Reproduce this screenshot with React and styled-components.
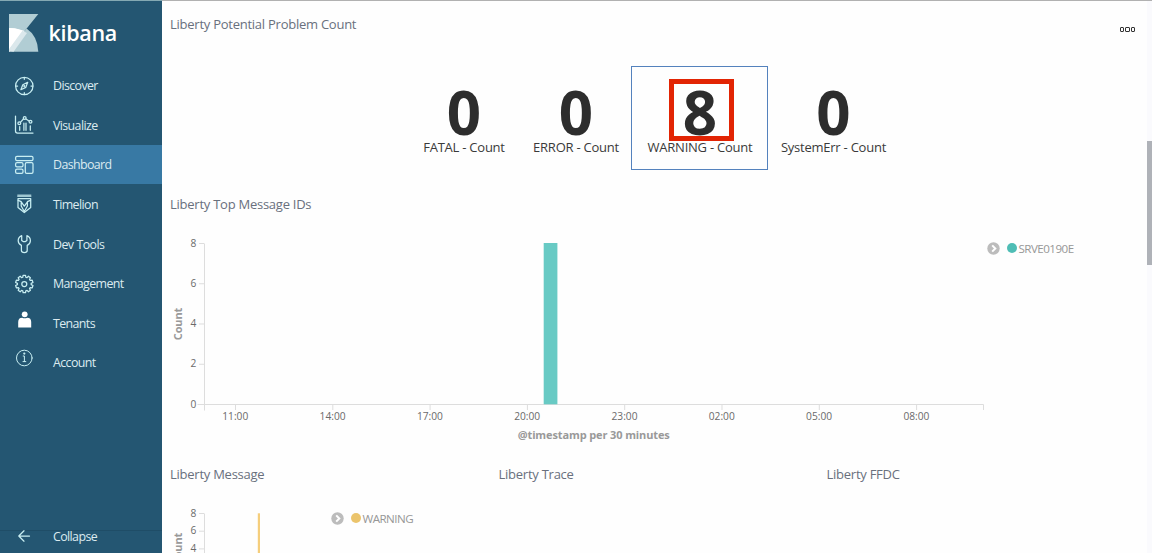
import React from "react";
import styled, { createGlobalStyle } from "styled-components";

const GlobalStyle = createGlobalStyle`
  * { box-sizing: border-box; }
  body { margin: 0; background: #fff; overflow: hidden; font-family: "Open Sans", "Noto Sans", sans-serif; }
`;

const Page = styled.div`
  display: flex;
  height: 553px;
  overflow: hidden;
  background: #fefefe;
`;

const Sidebar = styled.nav`
  width: 162px;
  flex: none;
  display: flex;
  flex-direction: column;
  background: #245672;
  border-top: 1px solid #84a9b3;
`;

const Brand = styled.div`
  display: flex;
  height: 64.4px;
  padding: 13px 0 0 9px;
  gap: 9.5px;
  flex: none;
`;

const BrandName = styled.span`
  color: #fff;
  font: 600 21.5px/38px "Open Sans", sans-serif;
  letter-spacing: -0.3px;
`;

const NavItem = styled.a`
  display: flex;
  align-items: center;
  flex: none;
  height: 39.6px;
  padding: 1px 0 0 14px;
  gap: 18px;
  color: #dcebf0;
  font-size: 12.4px;
  letter-spacing: -0.6px;
  word-spacing: 0.5px;
  background: ${(p) => (p.$active ? "#3879a4" : "transparent")};

  svg {
    flex: none;
    position: relative;
    top: ${(p) => p.$lift || 0}px;
  }
`;

const CollapseBar = styled(NavItem)`
  height: 23px;
  margin-top: auto;
  padding-top: 0;
  border-top: 1px solid #1f4d67;
  align-items: flex-start;
  line-height: 11px;
`;

const Main = styled.main`
  flex: 1;
  min-width: 0;
  display: flex;
  flex-direction: column;
  border-top: 1px solid #b1b1b1;
`;

const Scrollbar = styled.div`
  width: 5px;
  flex: none;
  padding-top: 140px;
  background: #fafafd;
  border-top: 1px solid #b1b1b1;
`;

const Thumb = styled.div`
  height: 124px;
  background: #afb2b8;
`;

const Panel = styled.section`
  height: ${(p) => p.$height}px;
  flex: none;
`;

const PanelHeader = styled.header`
  display: flex;
  justify-content: space-between;
  height: 56px;
  padding: 13px 12px 0 8px;
`;

const PanelTitle = styled.h2`
  margin: 0;
  color: #69707d;
  font-size: 13px;
  font-weight: 400;
  line-height: 20px;
  letter-spacing: -0.25px;
  white-space: nowrap;
`;

const MenuDots = styled.div`
  display: flex;
  gap: 1px;
  padding-top: 13px;
  span {
    width: 4.4px;
    height: 4.6px;
    border: 1px solid #333;
    border-radius: 1px;
  }
`;

const Metrics = styled.div`
  display: flex;
  padding: 9px 0 0 245px;
`;

const Metric = styled.div`
  width: ${(p) => p.$width}px;
  height: 104px;
  border: 1px solid ${(p) => (p.$selected ? "#5482bd" : "transparent")};
  display: flex;
  flex-direction: column;
  align-items: center;
  padding-top: 12px;
`;

const MetricValue = styled.div`
  width: 65px;
  height: 62px;
  margin-left: ${(p) => (p.$marked ? 3 : 1)}px;
  border: 5px solid ${(p) => (p.$marked ? "#e22404" : "transparent")};
  color: #2d2d2d;
  font: 700 60px/57px "Open Sans", sans-serif;
  display: flex;
  justify-content: center;

  span { margin-left: ${(p) => (p.$marked ? -2 : 0)}px; }
`;

const MetricLabel = styled.div`
  color: #3a3a3a;
  font-size: 13px;
  line-height: 16px;
  letter-spacing: -0.24px;
  margin: -2px 0 0 1px;
  white-space: nowrap;
`;

const ChartRow = styled.div`
  display: flex;
`;

const Legend = styled.div`
  display: flex;
  align-items: center;
  height: 22px;
  color: #979797;
  font-size: 11.6px;
  letter-spacing: -0.53px;
`;

const LegendDot = styled.span`
  width: 10px;
  height: 10px;
  border-radius: 50%;
  margin: 0 2px 0 6.5px;
  background: ${(p) => p.$color};
`;

const Thirds = styled.div`
  display: grid;
  grid-template-columns: 328.5px 328px 1fr;
`;

const Tick = styled.text`
  fill: #6a6a6a;
  font-size: 10.2px;
`;

const AxisTitle = styled.text`
  fill: #999;
  font-size: 11px;
  font-weight: 700;
  letter-spacing: -0.12px;
`;

const Icon = ({ children }) => (
  <svg width="21" height="20" viewBox="0 0 21 20" fill="none" stroke="#c8eef2" strokeWidth="1.25" strokeLinejoin="round" strokeLinecap="round">
    {children}
  </svg>
);

const gearPath = (() => {
  const pts = [];
  for (let i = 0; i < 10; i++) {
    [[-13, 6.9], [-8, 8.8], [8, 8.8], [13, 6.9]].forEach(([d, r]) => {
      const a = ((i * 36 + d) * Math.PI) / 180;
      pts.push(`${(10.3 + r * Math.sin(a)).toFixed(2)} ${(10 - r * Math.cos(a)).toFixed(2)}`);
    });
  }
  return `M${pts.join("L")}Z`;
})();

const NAV = [
  { label: "Discover", icon: <><circle cx="10.3" cy="10" r="8.7" /><path d="M13.7 6.3L11.8 11.4L6.9 13.7L8.8 8.8ZM10.3 1.5v1.8M10.3 16.7v1.8M1.8 10h1.8M17 10h1.8" /><circle cx="10.3" cy="10" r=".5" /></> },
  { label: "Visualize", icon: <><path d="M1.5 1v15q0 2 2 2h15.5M5.7 15.3v-3.7M9.9 15.3V8M12 15.3V8M16.3 15.3v-4.5M6.4 7.3L9.4 4M12 4L15 6" /><circle cx="5.3" cy="8.3" r="1.4" /><circle cx="10.7" cy="3" r="1.4" /><circle cx="16.5" cy="6.7" r="1.4" /></> },
  { label: "Dashboard", active: true, icon: <><rect x="1.6" y="1.3" width="17.4" height="4.3" rx="1.4" /><rect x="1.6" y="7.6" width="7.4" height="4.2" rx="1.4" /><rect x="1.6" y="14" width="7.4" height="4.3" rx="1.4" /><rect x="11.3" y="7.6" width="7.7" height="10.7" rx="1.4" /></> },
  { label: "Timelion", icon: <><path d="M3.7 1h13.2M3.7 2.3h13.2" opacity=".75" /><path d="M4 4.5h12.7v9.1L10.3 18.5L4 13.6Z" /><path d="M4.2 6.4l3 1.2v4.4l3.1 5.5l3.1-5.5V7.6l3-1.2M7.4 8.2l2.9 4L13.3 8.2" /></> },
  { label: "Dev Tools", icon: <path d="M7.7 1.7v4.7l1.5 1.2h2.2l1.5-1.2V1.7C15.2 2.6 16.4 4.4 16.4 6.8c0 2-1.2 3.6-3.2 4.6v5.2q0 2-2.9 2t-2.9-2v-5.2C5.4 10.4 4.2 8.8 4.2 6.8C4.2 4.4 5.4 2.6 7.7 1.7Z" /> },
  { label: "Management", icon: <><path d={gearPath} /><circle cx="10.3" cy="10" r="2.5" /></> },
  { label: "Tenants", lift: -3.5, icon: <g fill="#fff" stroke="none"><circle cx="10.7" cy="4.3" r="2.9" /><path d="M4.2 17.4V12q0-4.3 4-4.3q2.5 1.3 5 0q4 0 4 4.3v5.4Z" /></g> },
  { label: "Account", lift: -4.5, icon: <><circle cx="10.3" cy="10" r="7.8" strokeWidth="1" /><path d="M9.2 8h1.2v5.5M9 13.6h2.8" strokeWidth="1" /><circle cx="10.3" cy="5.5" r=".5" /></> },
];

const KibanaMark = () => (
  <svg width="30" height="38" viewBox="0 0 30 38">
    <path d="M0 0H29.3L0 36.4Z" fill="#b1cdd4" />
    <path d="M0 14A29.3 24 0 0 1 18 18.6L0 38Z" fill="#fff" />
    <path d="M17.6 14.6Q28.6 22 29.3 37.7H4.5L0 36.4Z" fill="#b1cdd4" />
    <path d="M13 16.6L18 18.9L4.6 37.7H0V34.5Z" fill="#dbe8ec" />
    <path d="M0 14A29.3 24 0 0 1 13.4 16.8L0 35Z" fill="#fff" />
  </svg>
);

const Toggle = () => (
  <svg width="13" height="13" viewBox="0 0 13 13">
    <circle cx="6.5" cy="6.5" r="6.2" fill="#bcbcbc" />
    <path d="M5.2 3.4L8.3 6.5L5.2 9.6" fill="none" stroke="#fff" strokeWidth="2" />
  </svg>
);

const HOURS = ["11:00", "14:00", "17:00", "20:00", "23:00", "02:00", "05:00", "08:00"];

const TopChart = () => (
  <svg width="825" height="212" viewBox="0 0 825 212">
    <path d="M42.5 6.5V173.5M35.5 167.5H821.5V173" fill="none" stroke="#ddd" />
    {[8, 6, 4, 2, 0].map((v, i) => (
      <g key={v}>
        <path d={`M37 ${6.5 + i * 40.25}H42`} stroke="#ddd" />
        <Tick x="34.3" y={9.5 + i * 40.25} textAnchor="end">{v}</Tick>
      </g>
    ))}
    {HOURS.map((h, i) => (
      <g key={h}>
        <path d={`M${73.5 + i * 97.3} 168v5`} stroke="#ddd" />
        <Tick x={73.3 + i * 97.3} y="183" textAnchor="middle">{h}</Tick>
      </g>
    ))}
    <rect x="381.7" y="6" width="13.7" height="161.3" fill="#68cac4" />
    <AxisTitle transform="translate(20 87) rotate(-90)" textAnchor="middle">Count</AxisTitle>
    <AxisTitle x="431.7" y="202" textAnchor="middle">@timestamp per 30 minutes</AxisTitle>
  </svg>
);

const MessageChart = () => (
  <svg width="169" height="90" viewBox="0 0 169 90">
    <path d="M42.5 6.5V90" stroke="#ddd" />
    {[8, 6, 4].map((v, i) => (
      <g key={v}>
        <path d={`M37 ${6.5 + i * 17.7}H42`} stroke="#ddd" />
        <Tick x="34.3" y={9.7 + i * 17.7} textAnchor="end">{v}</Tick>
      </g>
    ))}
    <rect x="95.8" y="6.3" width="2.2" height="84" fill="#f5ce7c" />
    <AxisTitle transform="translate(20 42) rotate(-90)" textAnchor="middle">Count</AxisTitle>
  </svg>
);

const METRICS = [
  { label: "FATAL - Count", value: 0, width: 113 },
  { label: "ERROR - Count", value: 0, width: 111 },
  { label: "WARNING - Count", value: 8, width: 137, selected: true },
  { label: "SystemErr - Count", value: 0, width: 130 },
];

export default function App() {
  return (
    <Page>
      <GlobalStyle />
      <Sidebar>
        <Brand>
          <KibanaMark />
          <BrandName>kibana</BrandName>
        </Brand>
        {NAV.map((n) => (
          <NavItem key={n.label} $active={n.active} $lift={n.lift}>
            <Icon>{n.icon}</Icon>
            {n.label}
          </NavItem>
        ))}
        <CollapseBar $lift={-5}>
          <Icon><path d="M15.5 10H5M10 4.8L4.8 10L10 15.2" /></Icon>
          Collapse
        </CollapseBar>
      </Sidebar>
      <Main>
        <Panel $height={180}>
          <PanelHeader>
            <PanelTitle>Liberty Potential Problem Count</PanelTitle>
            <MenuDots><span /><span /><span /></MenuDots>
          </PanelHeader>
          <Metrics>
            {METRICS.map((m) => (
              <Metric key={m.label} $width={m.width} $selected={m.selected}>
                <MetricValue $marked={m.selected}><span>{m.value}</span></MetricValue>
                <MetricLabel>{m.label}</MetricLabel>
              </Metric>
            ))}
          </Metrics>
        </Panel>
        <Panel $height={270}>
          <PanelHeader><PanelTitle>Liberty Top Message IDs</PanelTitle></PanelHeader>
          <ChartRow>
            <TopChart />
            <Legend><Toggle /><LegendDot $color="#4fbdb5" />SRVE0190E</Legend>
          </ChartRow>
        </Panel>
        <Thirds>
          <Panel $height={102}>
            <PanelHeader><PanelTitle>Liberty Message</PanelTitle></PanelHeader>
            <ChartRow>
              <MessageChart />
              <Legend><Toggle /><LegendDot $color="#ebc46c" />WARNING</Legend>
            </ChartRow>
          </Panel>
          <Panel $height={102}>
            <PanelHeader><PanelTitle>Liberty Trace</PanelTitle></PanelHeader>
          </Panel>
          <Panel $height={102}>
            <PanelHeader><PanelTitle>Liberty FFDC</PanelTitle></PanelHeader>
          </Panel>
        </Thirds>
      </Main>
      <Scrollbar><Thumb /></Scrollbar>
    </Page>
  );
}
